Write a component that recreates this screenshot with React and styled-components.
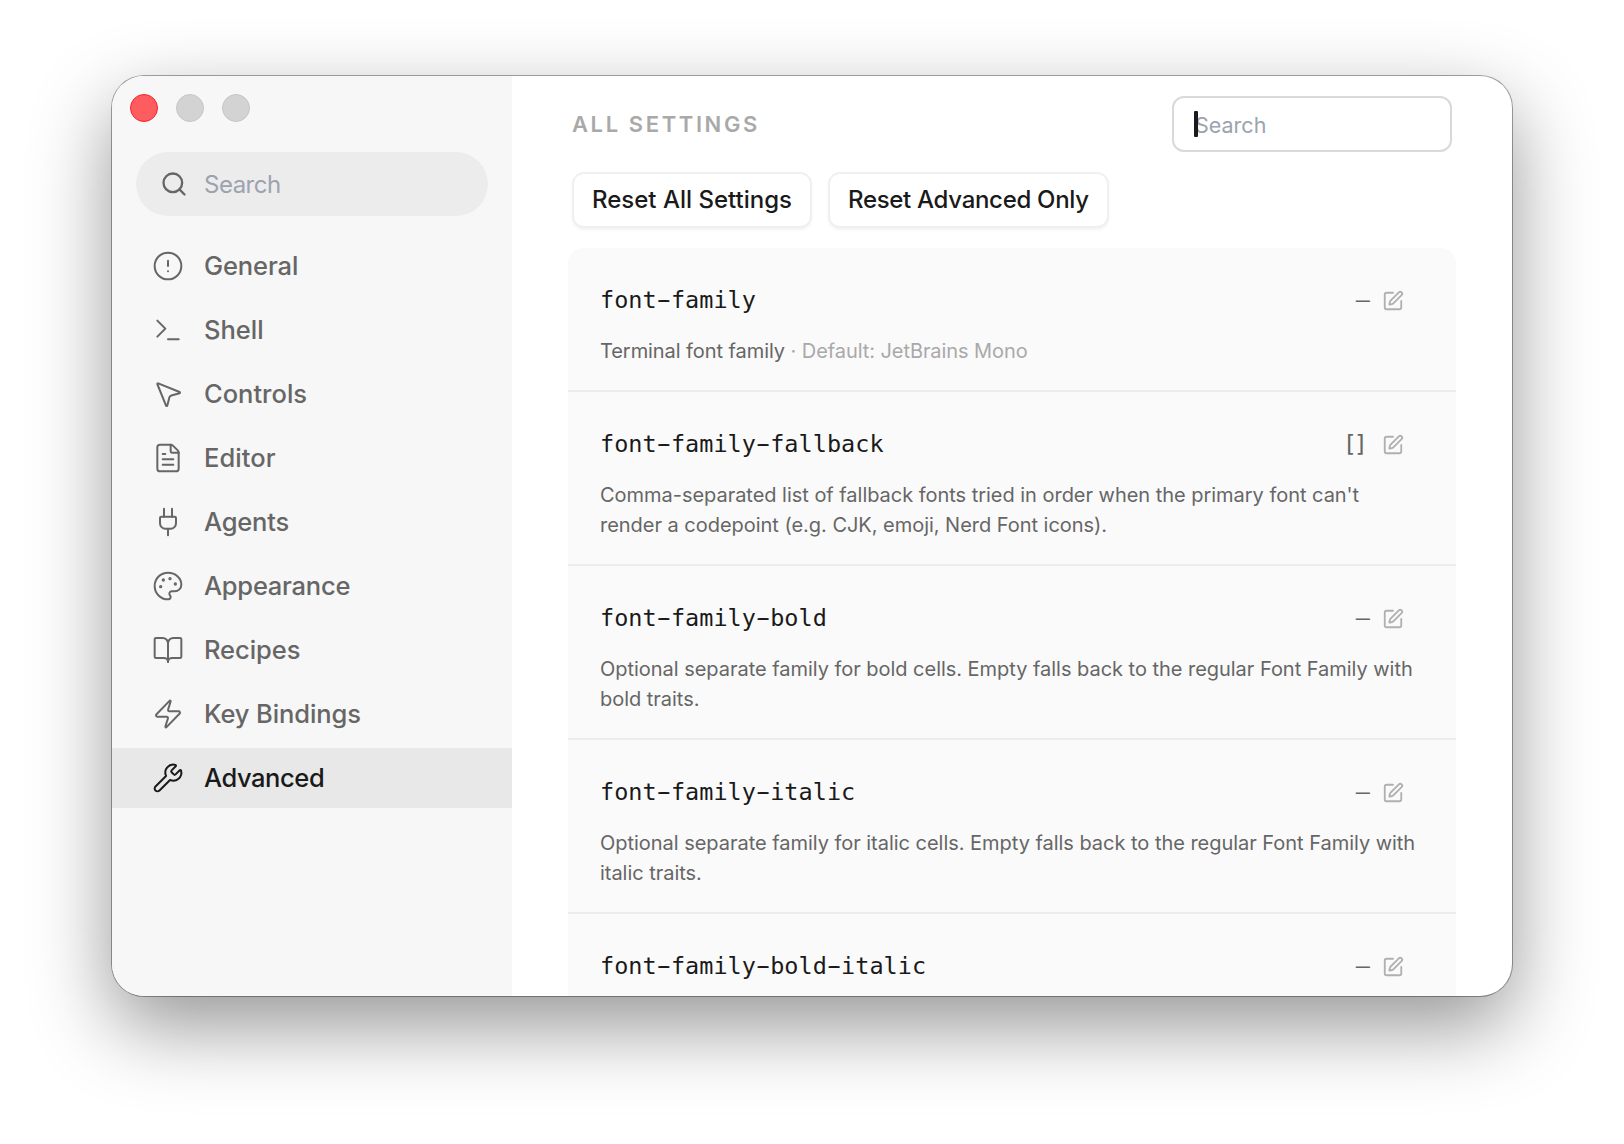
import React from 'react';
import styled, { createGlobalStyle, css } from 'styled-components';
import {
  BookOpen,
  CircleAlert,
  FileText,
  MousePointer2,
  Palette,
  Plug,
  Search,
  SquarePen,
  Terminal,
  Wrench,
  Zap,
} from 'lucide-react';

const colors = {
  text: '#1a1a1a',
  muted: '#666666',
  faint: '#a9a9a9',
  placeholder: '#9ca3af',
  sidebar: '#f7f7f7',
  sidebarSearch: '#ececec',
  active: '#e8e8e8',
  card: '#fafafa',
  divider: '#ececec',
};

const sans = 'Inter, "Liberation Sans", sans-serif';
const mono = '"DejaVu Sans Mono", monospace';

const GlobalStyle = createGlobalStyle`
  * {
    box-sizing: border-box;
  }

  body {
    margin: 0;
    background: #ffffff;
    font-family: ${sans};
    color: ${colors.text};
  }
`;

const Desktop = styled.div`
  height: 1144px;
  padding: 76px 112px;
  overflow: hidden;
`;

const Window = styled.div`
  display: flex;
  width: 1400px;
  height: 920px;
  overflow: hidden;
  border-radius: 32px;
  background: #ffffff;
  box-shadow:
    0 0 0 1px rgba(0, 0, 0, 0.34),
    0 30px 80px rgba(0, 0, 0, 0.42);
`;

const Sidebar = styled.aside`
  flex: 0 0 400px;
  background: ${colors.sidebar};
`;

const TrafficLights = styled.div`
  display: flex;
  gap: 18px;
  padding: 18px 18px 0;
`;

const Light = styled.span`
  width: 28px;
  height: 28px;
  border-radius: 50%;
  border: 1px solid ${props => (props.$close ? '#f8212f' : '#c6c6c6')};
  background: ${props => (props.$close ? '#ff5c60' : '#d3d3d3')};
`;

const SidebarSearch = styled.label`
  display: flex;
  align-items: center;
  gap: 16px;
  height: 64px;
  margin: 30px 24px 20px;
  padding: 0 24px;
  border-radius: 32px;
  background: ${colors.sidebarSearch};
  color: ${colors.muted};

  svg {
    flex: none;
  }
`;

const inputReset = css`
  width: 100%;
  min-width: 0;
  padding: 0;
  border: 0;
  outline: 0;
  background: transparent;
  font-family: ${sans};

  &::placeholder {
    color: ${colors.placeholder};
    opacity: 1;
  }
`;

const SidebarInput = styled.input`
  ${inputReset}
  height: 32px;
  font-size: 24px;
  letter-spacing: -0.5px;
`;

const Nav = styled.nav`
  display: flex;
  flex-direction: column;
  gap: 4px;
`;

const NavItem = styled.a`
  display: flex;
  align-items: center;
  gap: 20px;
  height: 60px;
  padding-left: 40px;
  background: ${props => (props.$active ? colors.active : 'transparent')};
  color: ${props => (props.$active ? colors.text : colors.muted)};
`;

const NavLabel = styled.span`
  padding-bottom: 2px;
  font-size: 25.5px;
  font-weight: 500;
  letter-spacing: ${props => props.$tracking || 0}px;
`;

const Main = styled.main`
  flex: 1;
  display: flex;
  flex-direction: column;
  gap: 20px;
  padding: 20px 56px 0;
`;

const Header = styled.header`
  display: flex;
  align-items: center;
  justify-content: space-between;
  flex: 0 0 56px;
  padding: 0 4px;
`;

const Title = styled.h1`
  margin: 0;
  font-size: 22px;
  font-weight: 600;
  letter-spacing: 2.6px;
  color: ${colors.faint};
`;

const Field = styled.label`
  position: relative;
  display: flex;
  align-items: center;
  width: 280px;
  height: 56px;
  padding: 2px 21px 0;
  border: 2px solid #d9d9d9;
  border-radius: 12px;
`;

const FieldInput = styled.input`
  ${inputReset}
  height: 30px;
  font-size: 21.5px;
`;

const Caret = styled.span`
  position: absolute;
  top: 13px;
  left: 20px;
  width: 4px;
  height: 26px;
  border-radius: 1px;
  background: ${colors.text};
`;

const Actions = styled.div`
  display: flex;
  gap: 16px;
  flex: 0 0 56px;
  padding: 0 4px;
`;

const Button = styled.button`
  padding: 0 18px 2px;
  border: 2px solid #f0f0f0;
  border-radius: 12px;
  background: #ffffff;
  box-shadow: 0 2px 3px rgba(0, 0, 0, 0.05);
  color: ${colors.text};
  font-family: ${sans};
  font-size: 24px;
  font-weight: 500;
  letter-spacing: ${props => props.$tracking || 0}px;
  white-space: nowrap;
`;

const List = styled.section`
  flex: none;
  overflow: hidden;
  border-radius: 16px;
  background: ${colors.card};
`;

const Setting = styled.article`
  padding: 24px 32px;
  border-bottom: 2px solid ${colors.divider};
`;

const SettingHead = styled.div`
  display: flex;
  align-items: center;
  height: 56px;
  margin-bottom: 8px;
  padding-right: 20px;
  font-family: ${mono};
  font-size: 23.5px;

  svg {
    margin-top: 2px;
  }
`;

const SettingName = styled.h2`
  flex: 1;
  margin: 0;
  font-size: inherit;
  font-weight: 400;
  letter-spacing: 0.03px;
`;

/* the mono face has a short hyphen, the shadows stretch it to the cell width */
const Hyphen = styled.span`
  vertical-align: 1px;
  line-height: 1;
  text-shadow: -2.5px 0 ${colors.text}, 2.5px 0 ${colors.text};
`;

const Value = styled.span`
  margin-right: ${props => (props.$tight ? 17 : 12)}px;
  letter-spacing: ${props => (props.$tight ? -3 : 0)}px;
  color: ${colors.muted};
`;

const Description = styled.p`
  margin: 0;
  font-size: 20px;
  line-height: 30px;
  letter-spacing: ${props => (props.$tight ? -0.07 : -0.03)}px;
  color: ${colors.muted};
  white-space: pre-line;
`;

const Default = styled.span`
  color: ${colors.faint};
`;

const navItems = [
  { label: 'General', icon: CircleAlert, tracking: -0.1 },
  { label: 'Shell', icon: Terminal },
  { label: 'Controls', icon: MousePointer2 },
  { label: 'Editor', icon: FileText, tracking: 0.05 },
  { label: 'Agents', icon: Plug, tracking: -0.2 },
  { label: 'Appearance', icon: Palette, tracking: -0.24 },
  { label: 'Recipes', icon: BookOpen, tracking: -0.05 },
  { label: 'Key Bindings', icon: Zap, tracking: -0.1 },
  { label: 'Advanced', icon: Wrench, tracking: -0.42, active: true },
];

const settings = [
  { name: 'font-family', value: '—', description: 'Terminal font family', fallback: 'JetBrains Mono' },
  {
    name: 'font-family-fallback',
    value: '[]',
    description:
      "Comma-separated list of fallback fonts tried in order when the primary font can't\nrender a codepoint (e.g. CJK, emoji, Nerd Font icons).",
  },
  {
    name: 'font-family-bold',
    value: '—',
    description:
      'Optional separate family for bold cells. Empty falls back to the regular Font Family with\nbold traits.',
  },
  {
    name: 'font-family-italic',
    value: '—',
    description:
      'Optional separate family for italic cells. Empty falls back to the regular Font Family with\nitalic traits.',
  },
  { name: 'font-family-bold-italic', value: '—' },
];

function SettingKey({ name }) {
  return (
    <SettingName>
      {name.split('-').map((part, i) => (
        <React.Fragment key={i}>
          {i > 0 && <Hyphen>-</Hyphen>}
          {part}
        </React.Fragment>
      ))}
    </SettingName>
  );
}

function App() {
  return (
    <Desktop>
      <GlobalStyle />
      <Window>
        <Sidebar>
          <TrafficLights>
            <Light $close />
            <Light />
            <Light />
          </TrafficLights>
          <SidebarSearch>
            <Search size={28} />
            <SidebarInput placeholder="Search" />
          </SidebarSearch>
          <Nav>
            {navItems.map(({ label, icon: Icon, tracking, active }) => (
              <NavItem key={label} $active={active}>
                <Icon size={32} strokeWidth={1.5} />
                <NavLabel $tracking={tracking}>{label}</NavLabel>
              </NavItem>
            ))}
          </Nav>
        </Sidebar>
        <Main>
          <Header>
            <Title>ALL SETTINGS</Title>
            <Field>
              <FieldInput placeholder="Search" />
              <Caret />
            </Field>
          </Header>
          <Actions>
            <Button>Reset All Settings</Button>
            <Button $tracking={-0.3}>Reset Advanced Only</Button>
          </Actions>
          <List>
            {settings.map(({ name, value, description, fallback }) => (
              <Setting key={name}>
                <SettingHead>
                  <SettingKey name={name} />
                  <Value $tight={value === '[]'}>{value}</Value>
                  <SquarePen size={22} color="#b0b0b0" />
                </SettingHead>
                {description && (
                  <Description $tight={Boolean(fallback)}>
                    {description}
                    {fallback && <Default> · Default: {fallback}</Default>}
                  </Description>
                )}
              </Setting>
            ))}
          </List>
        </Main>
      </Window>
    </Desktop>
  );
}

export default App;
